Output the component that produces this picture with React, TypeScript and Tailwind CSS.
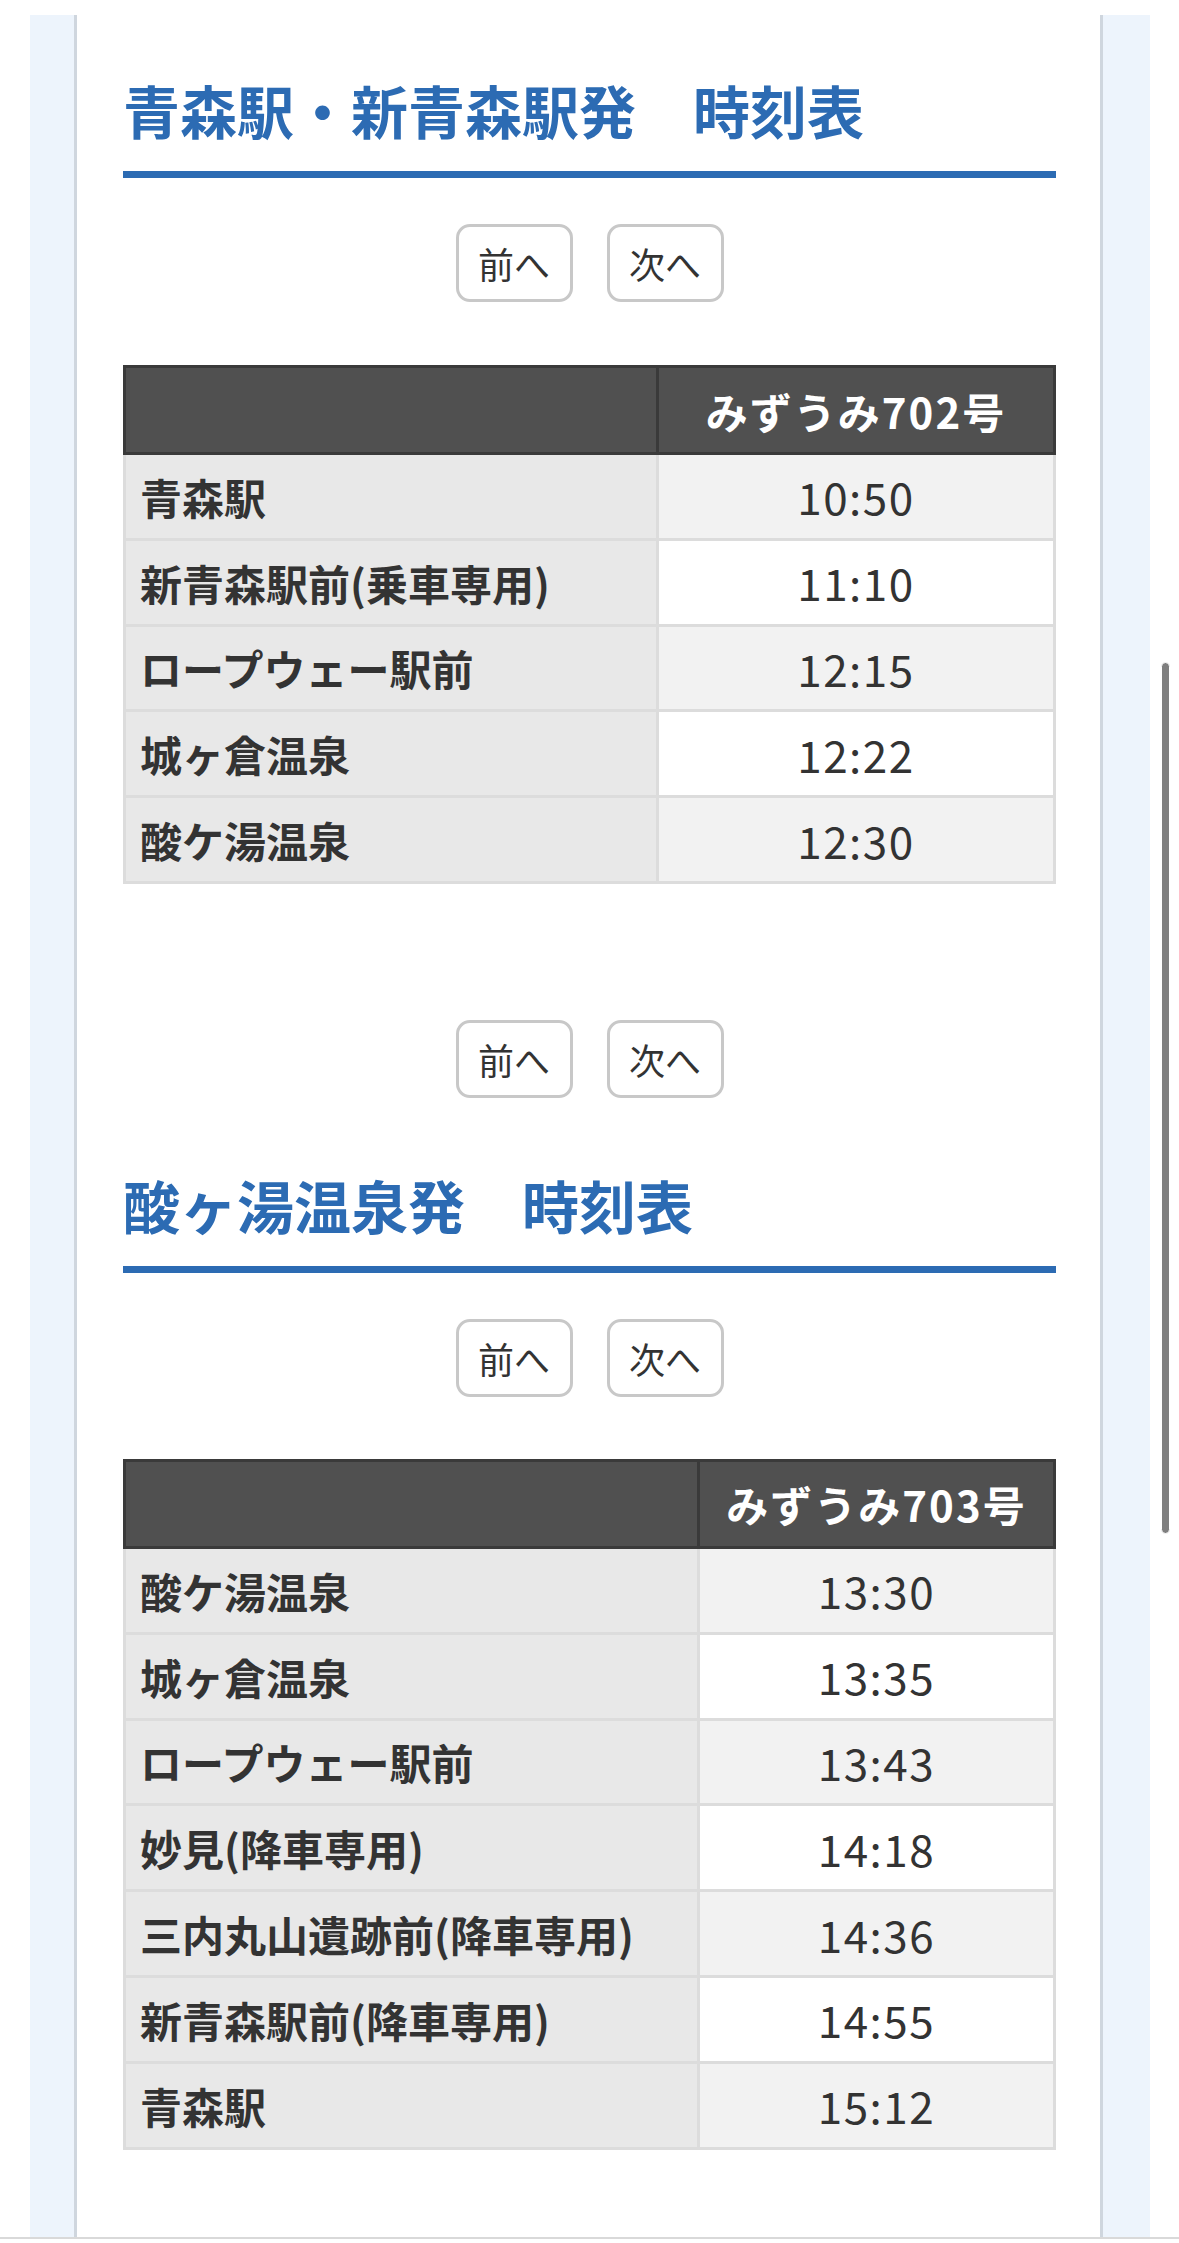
import React from "react";

type Stop = { name: string; time: string };

const outbound: Stop[] = [
  { name: "青森駅", time: "10:50" },
  { name: "新青森駅前(乗車専用)", time: "11:10" },
  { name: "ロープウェー駅前", time: "12:15" },
  { name: "城ヶ倉温泉", time: "12:22" },
  { name: "酸ケ湯温泉", time: "12:30" },
];

const inbound: Stop[] = [
  { name: "酸ケ湯温泉", time: "13:30" },
  { name: "城ヶ倉温泉", time: "13:35" },
  { name: "ロープウェー駅前", time: "13:43" },
  { name: "妙見(降車専用)", time: "14:18" },
  { name: "三内丸山遺跡前(降車専用)", time: "14:36" },
  { name: "新青森駅前(降車専用)", time: "14:55" },
  { name: "青森駅", time: "15:12" },
];

function PageButtons() {
  return (
    <div className="flex justify-center gap-[34px]">
      {["前へ", "次へ"].map((label) => (
        <button
          key={label}
          className="w-[117px] h-[78px] rounded-[14px] border-[3px] border-[#c8c8c8] bg-white text-[36px] leading-none text-[#333]"
        >
          {label}
        </button>
      ))}
    </div>
  );
}

function SectionTitle({ children }: { children: React.ReactNode }) {
  return (
    <h2 className="text-[57px] leading-[86px] font-bold text-[#2c6bb3] border-b-[7px] border-[#2c6bb3] pb-[19px]">
      {children}
    </h2>
  );
}

function Timetable({
  service,
  stops,
  labelCol,
}: {
  service: string;
  stops: Stop[];
  labelCol: string;
}) {
  return (
    <table className="w-full table-fixed border-collapse text-[42px] text-[#333]">
      <colgroup>
        <col className={labelCol} />
        <col />
      </colgroup>
      <thead>
        <tr>
          <th className="h-[87px] bg-[#505050] border-[3px] border-[#3a3a3a]" />
          <th className="h-[87px] bg-[#505050] border-[3px] border-[#3a3a3a] text-white font-bold text-center tracking-[2px]">
            {service}
          </th>
        </tr>
      </thead>
      <tbody>
        {stops.map((s, i) => (
          <tr key={s.name + s.time}>
            <td className="h-[85.8px] bg-[#e8e8e8] border-[3px] border-[#dcdcdc] px-[14px] font-bold whitespace-nowrap">
              {s.name}
            </td>
            <td
              className={`h-[85.8px] border-[3px] border-[#dcdcdc] text-center text-[44px] tracking-[1.5px] ${
                i % 2 === 0 ? "bg-[#f2f2f2]" : "bg-white"
              }`}
            >
              {s.time}
            </td>
          </tr>
        ))}
      </tbody>
    </table>
  );
}

export default function App() {
  return (
    <div className="relative min-h-[2243px] bg-white pt-[15px] font-['Noto_Sans_CJK_JP','Noto_Sans',sans-serif]">
      {/* light blue frame */}
      <div className="ml-[30px] w-[1120px] bg-[#edf4fc] pl-[44px] pr-[47px]">
        <div className="bg-white border-x-[3px] border-[#cfd6de] pl-[46px] pr-[44px] pt-[51px] pb-[87px]">
          <SectionTitle>青森駅・新青森駅発　時刻表</SectionTitle>

          <div className="mt-[46px]">
            <PageButtons />
          </div>

          <div className="mt-[63px]">
            <Timetable service="みずうみ702号" stops={outbound} labelCol="w-[533px]" />
          </div>

          <div className="mt-[136px]">
            <PageButtons />
          </div>

          <div className="mt-[63px]">
            <SectionTitle>酸ヶ湯温泉発　時刻表</SectionTitle>
          </div>

          <div className="mt-[46px]">
            <PageButtons />
          </div>

          <div className="mt-[62px]">
            <Timetable service="みずうみ703号" stops={inbound} labelCol="w-[574px]" />
          </div>
        </div>
      </div>
      <div className="h-[2px] bg-[#d9d9d9]" />

      {/* scroll indicator */}
      <div className="absolute left-[1161px] top-[662px] w-[9px] h-[872px] rounded-full bg-[#7f7f7f] border border-white" />
    </div>
  );
}
